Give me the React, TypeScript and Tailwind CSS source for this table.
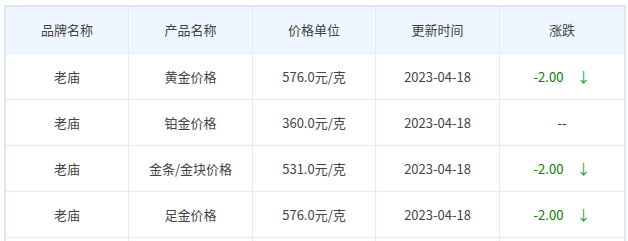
import React from 'react';

interface PriceRow {
  brand: string;
  product: string;
  price: string;
  date: string;
  change: string | null;
}

const rows: PriceRow[] = [
  { brand: '老庙', product: '黄金价格', price: '576.0元/克', date: '2023-04-18', change: '-2.00' },
  { brand: '老庙', product: '铂金价格', price: '360.0元/克', date: '2023-04-18', change: null },
  { brand: '老庙', product: '金条/金块价格', price: '531.0元/克', date: '2023-04-18', change: '-2.00' },
  { brand: '老庙', product: '足金价格', price: '576.0元/克', date: '2023-04-18', change: '-2.00' },
];

const headers = ['品牌名称', '产品名称', '价格单位', '更新时间', '涨跌'];

function Cell({ children, last, head }: { children?: React.ReactNode; last?: boolean; head?: boolean }) {
  return (
    <div
      className={
        'flex items-center justify-center border-b border-[#e1ebf9] ' +
        (last ? '' : 'border-r ') +
        (head ? 'h-[47px] bg-[#eef6ff]' : 'h-[46px]')
      }
    >
      {children}
    </div>
  );
}

export default function App() {
  return (
    <div
      className="bg-white w-[628px] h-[241px] overflow-hidden pt-[5px] pl-[4px] text-[13px] text-[#444]"
      style={{ fontFamily: '"Noto Sans CJK SC", "Noto Sans", sans-serif' }}
    >
      <div className="w-[622px] border-2 border-[#dce8fa]">
        <div className="grid grid-cols-[123px_124px_123px_124px_1fr]">
          {headers.map((h, i) => (
            <Cell key={h} head last={i === headers.length - 1}>
              {h}
            </Cell>
          ))}
          {rows.map((r, idx) => (
            <React.Fragment key={idx}>
              <Cell>{r.brand}</Cell>
              <Cell>{r.product}</Cell>
              <Cell>{r.price}</Cell>
              <Cell>{r.date}</Cell>
              <Cell last>
                {r.change ? (
                  <span className="flex items-center">
                    <span className="text-[#008000]">{r.change}</span>
                    <span className="ml-[13px] text-[#2ea043] text-[14px]">↓</span>
                  </span>
                ) : (
                  <span className="text-[#333]">--</span>
                )}
              </Cell>
            </React.Fragment>
          ))}
          {/* next row, cut off by the window */}
          <Cell />
          <Cell />
          <Cell />
          <Cell />
          <Cell last />
        </div>
      </div>
    </div>
  );
}
